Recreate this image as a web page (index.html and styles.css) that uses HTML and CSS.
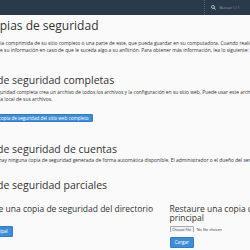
FILE: index.html
```html
<!DOCTYPE html>
<html lang="es">

<head>
    <meta charset="UTF-8" />
    <meta name="viewport" content="width=device-width, initial-scale=1.0" />
    <title>Copias de seguridad</title>
    <link rel="stylesheet" href="styles.css">
</head>

<body>
    <!-- Barra superior con la búsqueda -->
    <header class="topbar">
        <div class="search">
            <svg class="search-icon" width="5" height="5" viewBox="0 0 10 10">
                <circle cx="4" cy="4" r="3" fill="none" stroke="#c9d2db" stroke-width="1.6" />
                <line x1="6.2" y1="6.2" x2="9.4" y2="9.4" stroke="#c9d2db" stroke-width="1.8" />
            </svg>
            <span>Buscar ( / )</span>
        </div>
    </header>

    <main class="page">
        <h1 class="page-title">
            <svg class="page-icon" width="16" height="16" viewBox="0 0 16 16">
                <rect x="1" y="2" width="14" height="12" rx="2" fill="#5a9bd5" />
                <rect x="4" y="5" width="8" height="2" fill="#fff" />
            </svg>
            <span>Copias de seguridad</span>
        </h1>
        <p class="desc">Copia es una copia comprimida de su sitio completo o una parte de este, que pueda guardar en su computadora. Cuando realice una copia de seguridad, tendrá<br>una protección de su información en caso de que le suceda algo a su anfitrión. Para obtener más información, lea lo siguiente:</p>

        <section class="section">
            <h2>Copias de seguridad completas</h2>
            <p class="desc">Una copia de seguridad completa crea un archivo de todos los archivos y la configuración en su sitio web. Puede usar este archivo para<br>guardar una copia local de sus archivos.</p>
            <button class="btn btn-small">Descargue una copia de seguridad del sitio web completo</button>
        </section>

        <section class="section">
            <h2>Copias de seguridad de cuentas</h2>
            <p class="desc note">Actualmente no hay ninguna copia de seguridad generada de forma automática disponible. El administrador o el dueño del servidor puede habilitarlas.</p>
        </section>

        <section class="section section-tight">
            <h2>Copias de seguridad parciales</h2>
            <div class="cols">
                <div class="col">
                    <h3>Descargue una copia de seguridad del directorio principal</h3>
                    <button class="btn">Directorio principal</button>
                </div>
                <div class="col">
                    <h3>Restaure una copia de seguridad del directorio principal</h3>
                    <input class="file" type="file">
                    <button class="btn">Cargar</button>
                </div>
            </div>
        </section>
    </main>
</body>

</html>
```

FILE: styles.css
```css
html,
body {
    margin: 0;
    overflow: hidden;
}

body {
    font-family: 'Open Sans', 'Liberation Sans', sans-serif;
    background-color: #fafafa;
    color: #333;
    height: 250px;
}

.topbar {
    height: 15px;
    background-color: #2a3a4b;
    display: flex;
    justify-content: flex-end;
}

.search {
    width: 39px;
    border-left: 1px dotted #56677a;
    padding-left: 6px;
    display: flex;
    align-items: center;
    gap: 3.5px;
    font-size: 4px;
    color: #8f9dab;
    white-space: nowrap;
}

/* todo el contenido va corrido a la izquierda */
.page {
    margin-left: -38.5px;
    width: 408px;
    display: flex;
    flex-direction: column;
}

.page-title {
    font-size: 12px;
    font-weight: 400;
    line-height: 16px;
    margin: 3.3px 0 5.7px;
    display: flex;
    align-items: center;
    gap: 7.5px;
}

.desc {
    font-size: 4.9px;
    line-height: 6.6px;
    margin: 0;
    white-space: nowrap;
}

.section {
    margin-top: 21px;
    display: flex;
    flex-direction: column;
}

.section + .section {
    margin-top: 21px;
}

.section-tight {
    margin-top: 15px !important;
}

.section h2 {
    font-size: 10.5px;
    font-weight: 400;
    line-height: 13px;
    margin: 0 0 2px;
}

.note {
    margin-top: -1.4px;
}

.btn {
    display: block;
    width: fit-content;
    font-family: inherit;
    font-size: 4.6px;
    line-height: 6.5px;
    padding: 1.5px 4.2px;
    color: #fff;
    background-color: #3d8dd8;
    border: 1px solid #317dc5;
    border-radius: 1px;
}

.btn-small {
    margin-top: 12px;
    line-height: 6px;
    padding: 0 3px;
}

.cols {
    display: grid;
    grid-template-columns: 200px 200px;
    column-gap: 8px;
    margin-top: 10.5px;
}

.col h3 {
    font-size: 8.5px;
    font-weight: 400;
    line-height: 9px;
    margin: 0 0 3.5px;
}

.file {
    display: block;
    height: 6px;
    font-family: inherit;
    font-size: 3.8px;
    color: #333;
    margin-bottom: 5.3px;
}

.file::file-selector-button {
    font-family: inherit;
    font-size: 3.5px;
    padding: 0.3px 1.8px;
    margin-right: 3px;
    border: 0.5px solid #aaa;
    border-radius: 1px;
    background-color: #f2f2f2;
    color: #333;
}
```
